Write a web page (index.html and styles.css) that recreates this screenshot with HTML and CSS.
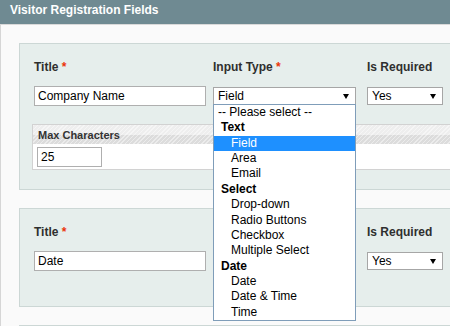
FILE: index.html
```html
<html>
<head>
    <title>Visitor Registration Fields</title>
    <link rel="stylesheet" href="styles.css">
</head>
<body>

<div class="section-head">Visitor Registration Fields</div>

<div class="section-body">

    <div class="option-box">
        <div class="field-grid">
            <label>Title <span class="required">*</span></label>
            <label>Input Type <span class="required">*</span></label>
            <label>Is Required</label>

            <input class="input-text" type="text" value="Company Name">
            <div class="select-cell">
                <div class="fake-select">Field</div>

                <!-- the open list of the input type select -->
                <div class="select-list">
                    <div class="opt placeholder">-- Please select --</div>
                    <div class="opt group">Text</div>
                    <div class="opt selected">Field</div>
                    <div class="opt">Area</div>
                    <div class="opt">Email</div>
                    <div class="opt group">Select</div>
                    <div class="opt">Drop-down</div>
                    <div class="opt">Radio Buttons</div>
                    <div class="opt">Checkbox</div>
                    <div class="opt">Multiple Select</div>
                    <div class="opt group">Date</div>
                    <div class="opt">Date</div>
                    <div class="opt">Date &amp; Time</div>
                    <div class="opt">Time</div>
                </div>
            </div>
            <div class="fake-select small">Yes</div>
        </div>

        <div class="type-box">
            <div class="type-head">Max Characters</div>
            <div class="type-body">
                <input class="input-text short" type="text" value="25">
            </div>
        </div>
    </div>

    <div class="option-box tall">
        <div class="field-grid">
            <label>Title <span class="required">*</span></label>
            <label>Input Type <span class="required">*</span></label>
            <label>Is Required</label>

            <input class="input-text" type="text" value="Date">
            <div class="fake-select">Date</div>
            <div class="fake-select small">Yes</div>
        </div>
    </div>

    <div class="option-box"></div>

</div>

</body>
</html>
```

FILE: styles.css
```css
body
{
    margin: 0;
    font-family: 'Liberation Sans', Arial, sans-serif;
    font-size: 12px;
    color: #2f2f2f;
    background-color: #fafafa;
    overflow: hidden;
}

.section-head
{
    height: 21px;
    padding: 3px 0 0 10px;
    line-height: 14px;
    background-color: #6f8a92;
    border-bottom: 1px solid #d9d9d9;
    color: #fff;
    font-weight: bold;
}

.section-body
{
    width: 480px;
    padding: 18px 0 0 18px;
    border-left: 1px solid #d6d6d6;
}

.option-box
{
    background-color: #e6eeec;
    border: 1px solid #ccd7d5;
    border-right: none;
    padding: 16px 0 19px 14px;
    margin-bottom: 18px;
}

.option-box.tall
{
    padding-bottom: 35px;
}

.field-grid
{
    display: grid;
    grid-template-columns: 179px 154px 76px;
    grid-template-rows: 14px 20px;
    row-gap: 12px;
}

label
{
    font-weight: bold;
    line-height: 14px;
}

.required
{
    color: #eb340a;
}

.input-text
{
    box-sizing: border-box;
    width: 172px;
    height: 20px;
    margin: 0;
    padding: 0 3px;
    border: 1px solid #afafaf;
    background-color: #fff;
    font-family: 'Liberation Sans', Arial, sans-serif;
    font-size: 12px;
    color: #000;
    outline: none;
}

.input-text.short
{
    width: 65px;
}

.select-cell
{
    position: relative;
    width: 143px;
}

.fake-select
{
    position: relative;
    box-sizing: border-box;
    width: 143px;
    height: 18px;
    margin-top: 1px;
    padding-left: 4px;
    line-height: 16px;
    border: 1px solid #a6a6a6;
    background-color: #fff;
    color: #000;
}

.fake-select.small
{
    width: 76px;
}

/* the little black arrow of a closed select */
.fake-select::after
{
    content: "";
    position: absolute;
    right: 6px;
    top: 6px;
    border-left: 3.5px solid transparent;
    border-right: 3.5px solid transparent;
    border-top: 5px solid #000;
}

.select-list
{
    position: absolute;
    top: 18px;
    left: 0;
    z-index: 5;
    box-sizing: border-box;
    width: 143px;
    height: 217px;
    border: 1px solid #7f9db9;
    background-color: #fff;
    color: #000;
}

.opt
{
    height: 15.36px;
    line-height: 15.36px;
    padding-left: 17px;
    white-space: nowrap;
}

.opt.placeholder
{
    padding-left: 4px;
}

.opt.group
{
    padding-left: 7px;
    font-weight: bold;
}

.opt.selected
{
    background-color: #1e90ff;
    color: #fff;
}

.type-box
{
    margin: 18px 0 0 -2px;
    border: 1px solid #d2d2d2;
    border-right: none;
    background-color: #fff;
}

.type-head
{
    height: 15px;
    padding: 4px 0 0 5px;
    line-height: 13px;
    font-size: 11px;
    font-weight: bold;
    color: #333;
    background:
        repeating-linear-gradient(-45deg, rgba(255, 255, 255, 0.45) 0 1px, transparent 1px 3px),
        linear-gradient(#eeeeee 50%, #dcdcdc 50%);
}

.type-body
{
    padding: 3px 0 2px 4px;
    height: 20px;
}
```
